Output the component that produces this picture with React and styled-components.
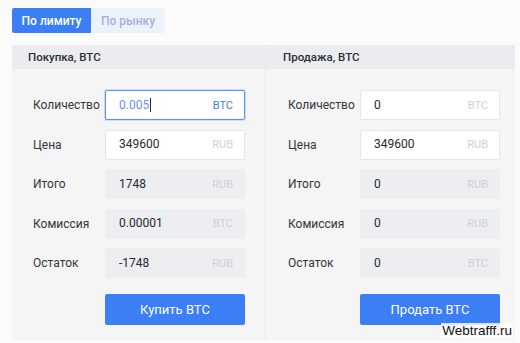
import React from 'react';
import styled, { createGlobalStyle } from 'styled-components';

const GlobalStyle = createGlobalStyle`
  html, body {
    margin: 0;
    padding: 0;
    background: #fbfbfb;
    font-family: Roboto, "Liberation Sans", Arial, sans-serif;
  }
`;

const Page = styled.div`
  position: relative;
  width: 520px;
  height: 343px;
  padding: 8px 5px 0 12px;
  box-sizing: border-box;
  overflow: hidden;
`;

const Tabs = styled.div`
  display: flex;
  height: 25px;
`;

const Tab = styled.div`
  display: flex;
  align-items: center;
  justify-content: center;
  width: ${({ $width }) => $width}px;
  font-size: 12px;
  font-weight: 500;
  color: ${({ $active }) => ($active ? '#ffffff' : '#a3b1dc')};
  background: ${({ $active }) => ($active ? '#3b7ef5' : '#edf1fa')};
  border-radius: ${({ $active }) => ($active ? '2px 0 0 2px' : '0 2px 2px 0')};
`;

const Panels = styled.div`
  display: grid;
  grid-template-columns: 253px 1px 249px;
  margin-top: 12px;
  height: 295px;
  background: #f5f5f5;
`;

const Divider = styled.div`
  background: #e9e9ec;
`;

const Panel = styled.section`
  display: flex;
  flex-direction: column;
`;

const Header = styled.div`
  height: 24px;
  display: flex;
  align-items: center;
  padding-left: ${({ $pad }) => $pad}px;
  background: #ebecef;
  font-size: 11.5px;
  font-weight: 500;
  color: #2b2f36;
`;

const Body = styled.div`
  display: flex;
  flex-direction: column;
  gap: 9.6px;
  padding: 21px 0 0 ${({ $pad }) => $pad}px;
`;

const Row = styled.div`
  display: grid;
  grid-template-columns: 72px 140px;
  align-items: center;
  height: 30px;
`;

const Label = styled.span`
  font-size: 12px;
  color: #33363b;
`;

const Field = styled.div`
  display: flex;
  align-items: center;
  justify-content: space-between;
  height: 30px;
  box-sizing: border-box;
  padding: 0 11px 0 13px;
  border-radius: 2px;
  font-size: 12px;
  background: ${({ $kind }) => ($kind === 'readonly' ? '#eceef1' : '#ffffff')};
  border: 1px solid
    ${({ $kind }) =>
      $kind === 'focus' ? '#5c8ff0' : $kind === 'readonly' ? '#eceef1' : '#e4e6ea'};
  box-shadow: ${({ $kind }) => ($kind === 'focus' ? '0 0 0 1px rgba(92,143,240,0.25)' : 'none')};
`;

const Value = styled.span`
  color: ${({ $focus }) => ($focus ? '#6d8ff0' : '#25282d')};
  display: flex;
  align-items: center;
  margin-top: -1px;
`;

const Caret = styled.span`
  display: inline-block;
  width: 1px;
  height: 14px;
  background: #25282d;
  margin-left: 1px;
`;

const Unit = styled.span`
  font-size: 11px;
  color: ${({ $focus }) => ($focus ? '#4a7be8' : '#cdd1d8')};
`;

const Action = styled.button`
  margin: 6px 0 0 72px;
  width: 140px;
  height: 31px;
  border: none;
  border-radius: 2px;
  background: #3b7ef6;
  color: #ffffff;
  font-family: inherit;
  font-size: 13px;
  padding: 0;
`;

const Watermark = styled.div`
  position: absolute;
  right: 7px;
  bottom: 5px;
  font-family: "Liberation Sans", Arial, sans-serif;
  font-size: 13.5px;
  color: #111;
  background: rgba(255, 255, 255, 0.8);
  padding: 0 1px;
`;

const buyRows = [
  { label: 'Количество', value: '0.005', unit: 'BTC', kind: 'focus' },
  { label: 'Цена', value: '349600', unit: 'RUB', kind: 'input' },
  { label: 'Итого', value: '1748', unit: 'RUB', kind: 'readonly' },
  { label: 'Комиссия', value: '0.00001', unit: 'BTC', kind: 'readonly' },
  { label: 'Остаток', value: '-1748', unit: 'RUB', kind: 'readonly' },
];

const sellRows = [
  { label: 'Количество', value: '0', unit: 'BTC', kind: 'input' },
  { label: 'Цена', value: '349600', unit: 'RUB', kind: 'input' },
  { label: 'Итого', value: '0', unit: 'RUB', kind: 'readonly' },
  { label: 'Комиссия', value: '0', unit: 'RUB', kind: 'readonly' },
  { label: 'Остаток', value: '0', unit: 'BTC', kind: 'readonly' },
];

const OrderPanel = ({ title, rows, action, headerPad, bodyPad }) => (
  <Panel>
    <Header $pad={headerPad}>{title}</Header>
    <Body $pad={bodyPad}>
      {rows.map((r) => (
        <Row key={r.label}>
          <Label>{r.label}</Label>
          <Field $kind={r.kind}>
            <Value $focus={r.kind === 'focus'}>
              {r.value}
              {r.kind === 'focus' && <Caret />}
            </Value>
            <Unit $focus={r.kind === 'focus'}>{r.unit}</Unit>
          </Field>
        </Row>
      ))}
      <Action>{action}</Action>
    </Body>
  </Panel>
);

export default function App() {
  return (
    <>
      <GlobalStyle />
      <Page>
        <Tabs>
          <Tab $active $width={79}>По лимиту</Tab>
          <Tab $width={74}>По рынку</Tab>
        </Tabs>
        <Panels>
          <OrderPanel title="Покупка, BTC" rows={buyRows} action="Купить BTC" headerPad={16} bodyPad={21} />
          <Divider />
          <OrderPanel title="Продажа, BTC" rows={sellRows} action="Продать BTC" headerPad={17} bodyPad={22} />
        </Panels>
        <Watermark>Webtrafff.ru</Watermark>
      </Page>
    </>
  );
}
